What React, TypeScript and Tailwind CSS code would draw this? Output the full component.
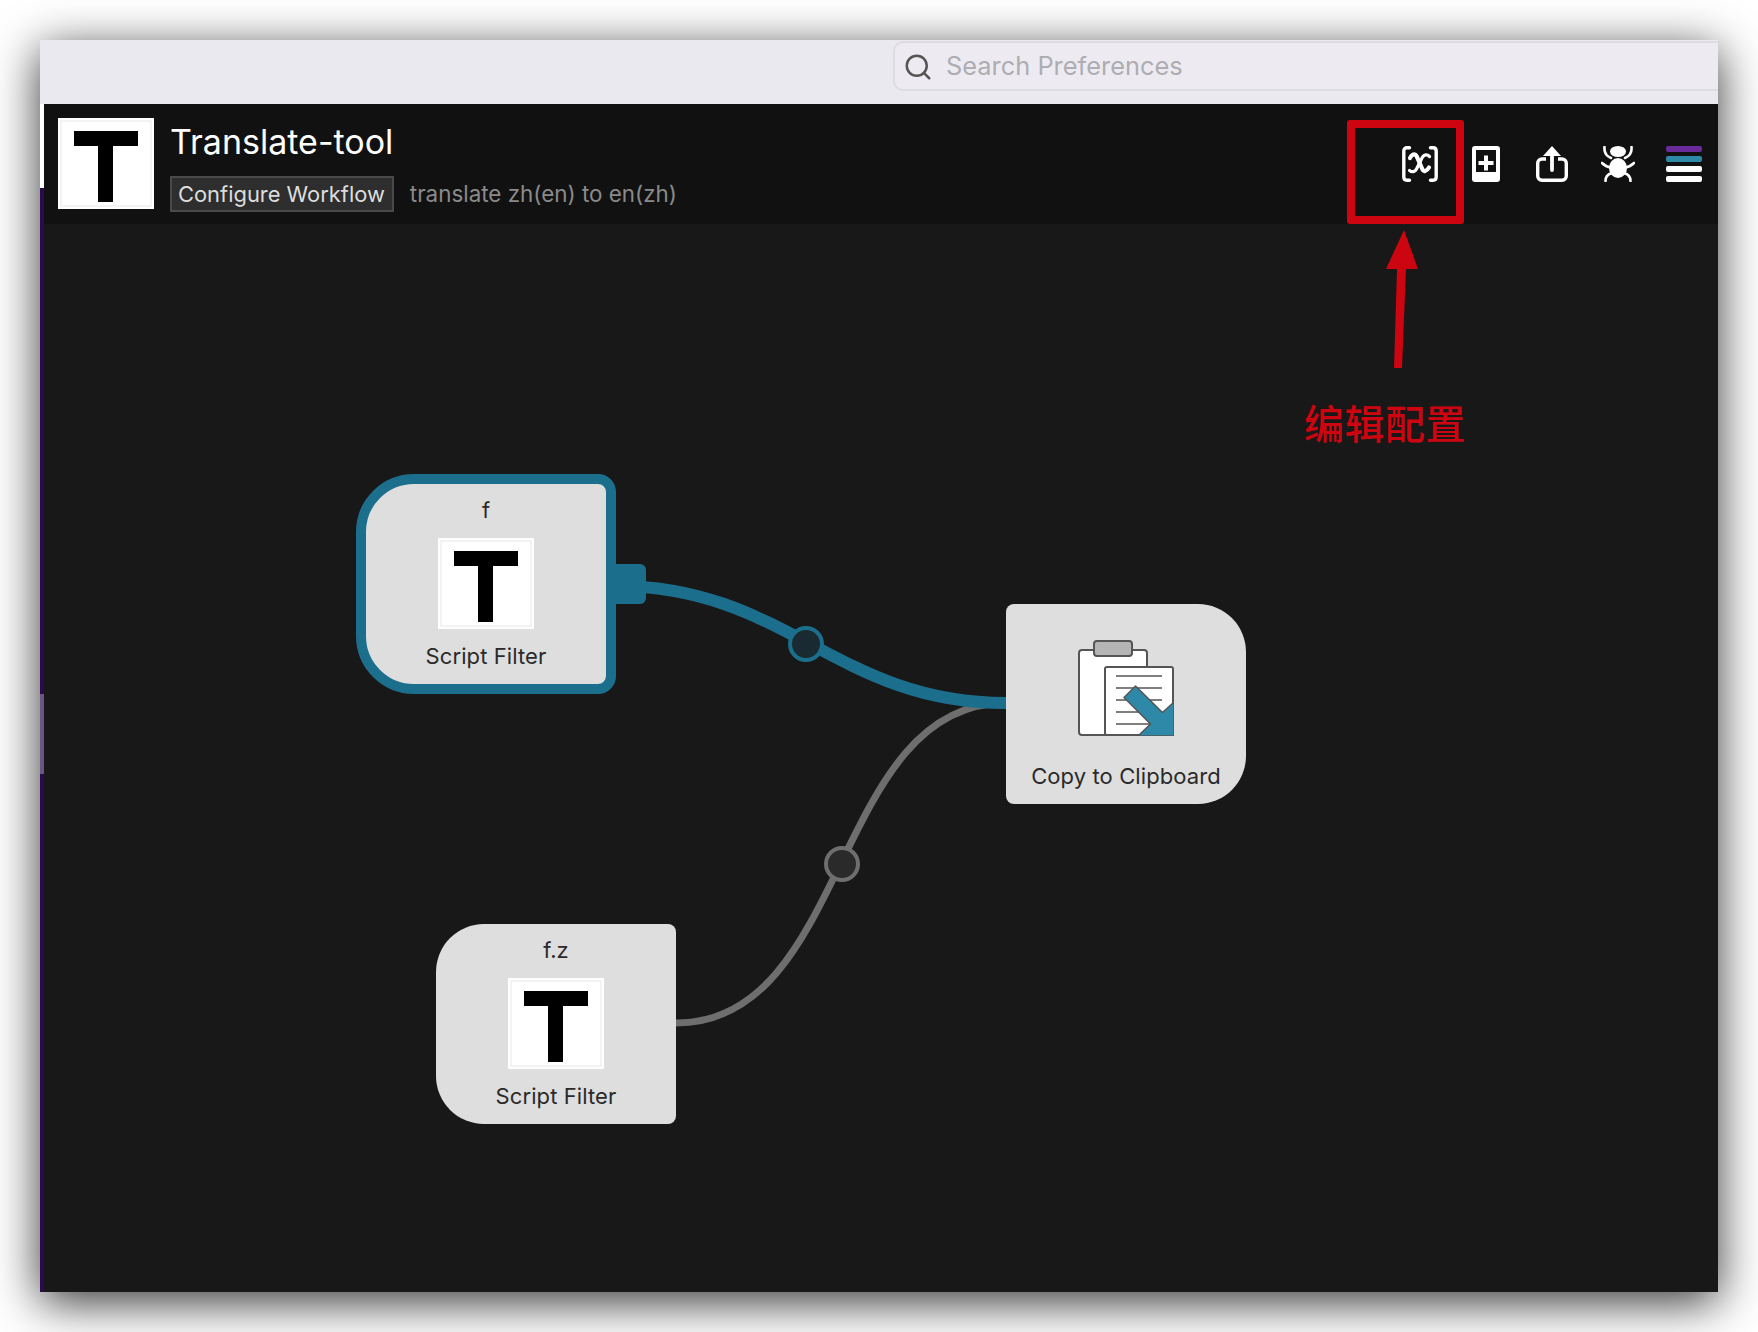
import { Search } from "lucide-react";

const UI_FONT = "font-['Inter','Liberation_Sans',sans-serif]";

// Workflow icon: white tile with a black T
function TileIcon() {
  return (
    <svg width="96" height="91" viewBox="0 0 96 91" className="shrink-0 block">
      <rect width="96" height="91" fill="#fff" />
      <rect x="3" y="3" width="90" height="85" fill="none" stroke="#efefef" strokeWidth="1.5" />
      <rect x="16" y="13" width="64" height="15" fill="#000" />
      <rect x="40" y="13" width="15" height="71" fill="#000" />
    </svg>
  );
}

function ClipboardIcon() {
  return (
    <svg width="96" height="96" viewBox="0 0 96 96" className="shrink-0 block">
      <rect x="1" y="10" width="68" height="85" rx="3" fill="#fff" stroke="#555" strokeWidth="2" />
      <rect x="16" y="1" width="38" height="15" rx="3" fill="#b5b5b5" stroke="#555" strokeWidth="2" />
      <rect x="27" y="27" width="68" height="68" rx="2" fill="#fff" stroke="#555" strokeWidth="2" />
      <path d="M38 36h46M38 48h46M38 60h46M38 72h46M38 84h46" stroke="#555" strokeWidth="1.5" fill="none" />
      <path d="M57.5 46 46 57.5 72.500 84 60 96 96 96 96 62 84.500 72.500Z" fill="#2e88a8" stroke="#555" strokeWidth="1.5" strokeLinejoin="round" />
    </svg>
  );
}

function VarsIcon() {
  return (
    <svg width="36" height="36" viewBox="0 0 36 36" fill="none" stroke="#fff" strokeWidth="3.4" strokeLinecap="round">
      <path d="M7.500 1.800H5C3 1.800 1.800 3 1.800 5V31C1.800 33 3 34.200 5 34.200H7.500" />
      <path d="M28.500 1.800H31C33 1.800 34.200 3 34.200 5V31C34.200 33 33 34.200 31 34.200H28.500" />
      <path d="M8 12C9.500 8.500 13 7 14.500 10L20.500 23.500C21.500 26 24.500 25.500 27 21.500" strokeWidth="4.200" />
      <path d="M27.500 10.500C25 8 22.500 8.500 20.500 11L14.500 23C13 26 10 26.500 7.500 24.500" strokeWidth="3.200" />
    </svg>
  );
}

function AddIcon() {
  return (
    <svg width="28" height="36" viewBox="0 0 28 36">
      <path
        fillRule="evenodd"
        fill="#fff"
        d="M3 0H25A3 3 0 0 1 28 3V33A3 3 0 0 1 25 36H3A3 3 0 0 1 0 33V3A3 3 0 0 1 3 0ZM4 4V26H24V4Z"
      />
      <path d="M14 9.500V24.500M6.500 17H21.500" stroke="#fff" strokeWidth="4" />
    </svg>
  );
}

function ShareIcon() {
  return (
    <svg width="32" height="36" viewBox="0 0 32 36" fill="none" stroke="#fff" strokeWidth="3.400">
      <path d="M10 13H6A4.300 4.300 0 0 0 1.700 17.300V30A4.300 4.300 0 0 0 6 34.300H26A4.300 4.300 0 0 0 30.300 30V17.300A4.300 4.300 0 0 0 26 13H22" />
      <path d="M16 24V7" strokeWidth="3.800" strokeLinecap="round" />
      <path d="M16 0 25 10H7Z" fill="#fff" stroke="none" />
    </svg>
  );
}

function BugIcon() {
  return (
    <svg width="34" height="36" viewBox="0 0 34 36" fill="none" stroke="#fff" strokeWidth="2.600" strokeLinecap="round">
      <ellipse cx="17" cy="5.500" rx="8" ry="5.500" fill="#fff" stroke="none" />
      <ellipse cx="17" cy="22" rx="9" ry="10" fill="#fff" stroke="none" />
      <path d="M3.500 1C3 6 5 10 10 12" />
      <path d="M30.500 1C31 6 29 10 24 12" />
      <path d="M1 17C4 20 7 21 10 21.500" />
      <path d="M33 17C30 20 27 21 24 21.500" />
      <path d="M4.500 35C4.500 31 7 28 11 27" />
      <path d="M29.500 35C29.500 31 27 28 23 27" />
    </svg>
  );
}

function MenuIcon() {
  return (
    <div className="flex flex-col gap-[4px] w-[36px]">
      <div className="h-[6px] rounded-[2px] bg-[#6a2b9a]" />
      <div className="h-[6px] rounded-[2px] bg-[#2e88a8]" />
      <div className="h-[6px] rounded-[2px] bg-white" />
      <div className="h-[6px] rounded-[2px] bg-white" />
    </div>
  );
}

function ScriptFilterBody({ label }: { label: string }) {
  return (
    <div className="flex flex-col items-center text-[#2a2a2a] text-[22px] tracking-[0.1px]">
      <div className="mt-[12px] h-[28px] leading-[28px]">{label}</div>
      <div className="mt-[14px]">
        <TileIcon />
      </div>
      <div className="mt-[13px] h-[28px] leading-[28px]">Script Filter</div>
    </div>
  );
}

function Wires() {
  return (
    <svg
      className="absolute inset-0"
      width="1674"
      height="1068"
      viewBox="44 224 1674 1068"
      fill="none"
    >
      <path d="M676 1023C850 1023 832 703 1006 703" stroke="#6e6e6e" strokeWidth="7" />
      <path d="M616 586C786 586 836 703 1006 703" stroke="#1b6f8d" strokeWidth="12" />
      <circle cx="806" cy="644" r="16" fill="#1a2a33" stroke="#1b6f8d" strokeWidth="4" />
      <circle cx="842" cy="864" r="16" fill="#2a2a2a" stroke="#6e6e6e" strokeWidth="4" />
    </svg>
  );
}

export default function App() {
  return (
    <div className={`relative w-[1758px] h-[1332px] overflow-hidden bg-white pt-[40px] pl-[40px] ${UI_FONT}`}>
      <div className="relative flex flex-col w-[1678px] h-[1252px] shadow-[0_10px_44px_rgba(0,0,0,0.8)]">
        {/* Title bar */}
        <div className="flex h-[64px] shrink-0 bg-[#ebe9f0] pl-[853px] pt-[1px]">
          <div className="flex items-center flex-1 h-[50px] pt-[1px] rounded-l-[10px] border-2 border-r-0 border-[#dedce3] bg-[#edebf1]">
            <Search size={30} strokeWidth={2} className="ml-[8px] text-[#555]" />
            <span className="ml-[13px] text-[25.4px] text-[#aeadb1]">Search Preferences</span>
          </div>
        </div>

        <div className="flex flex-1 min-h-0">
          {/* Left edge strip */}
          <div className="flex flex-col w-[4px] shrink-0 bg-[#2a0c4e]">
            <div className="h-[84px] bg-white" />
            <div className="h-[506px]" />
            <div className="h-[80px] bg-[#6b5585]" />
          </div>

          <div className="flex flex-col flex-1 min-w-0">
            {/* Workflow header */}
            <div className="flex h-[120px] shrink-0 bg-[#111111] pl-[14px] pt-[14px] pr-[16px]">
              <TileIcon />
              <div className="ml-[16px] flex flex-col">
                <div className="h-[48px] text-[34px] leading-[48px] text-white">Translate-tool</div>
                <div className="mt-[10px] flex items-center">
                  <div className="flex items-center h-[36px] border-2 border-[#4a4a4a] bg-[#2e2e2e] pl-[6px] pr-[7px] text-[21.9px] text-[#dddddd]">
                    Configure Workflow
                  </div>
                  <div className="ml-[16px] text-[22.4px] text-[#8a8a8a]">translate zh(en) to en(zh)</div>
                </div>
              </div>
              <div className="ml-auto flex items-start pt-[28px]">
                <VarsIcon />
                <div className="ml-[34px]">
                  <AddIcon />
                </div>
                <div className="ml-[36px]">
                  <ShareIcon />
                </div>
                <div className="ml-[33px]">
                  <BugIcon />
                </div>
                <div className="ml-[31px]">
                  <MenuIcon />
                </div>
              </div>
            </div>

            {/* Canvas */}
            <div className="relative flex-1 bg-[#181818]">
              <Wires />

              <div className="absolute left-[312px] top-[250px] w-[260px] h-[220px] border-[10px] border-[#1b6f8d] rounded-l-[58px] rounded-r-[18px] bg-[#dedede]">
                <ScriptFilterBody label="f" />
                <div className="absolute -right-[40px] top-[80px] w-[40px] h-[40px] rounded-r-[6px] bg-[#1b6f8d]" />
              </div>

              <div className="absolute left-[392px] top-[700px] w-[240px] h-[200px] rounded-l-[48px] rounded-r-[8px] bg-[#dedede]">
                <ScriptFilterBody label="f.z" />
              </div>

              <div className="absolute left-[962px] top-[380px] flex flex-col items-center w-[240px] h-[200px] pt-[36px] rounded-l-[8px] rounded-r-[48px] bg-[#dedede] text-[22px] tracking-[0.1px] text-[#2a2a2a]">
                <ClipboardIcon />
                <div className="mt-[26px] h-[28px] leading-[28px]">Copy to Clipboard</div>
              </div>
            </div>
          </div>
        </div>

        {/* Red annotation */}
        <div className="absolute left-[1307px] top-[80px] w-[117px] h-[104px] rounded-[3px] border-[8px] border-[#cc0510]" />
        <svg className="absolute left-[1346px] top-[190px]" width="32" height="138" viewBox="0 0 32 138">
          <path d="M18 0 0 39H11L8 138H16L20 39H32Z" fill="#cc0510" />
        </svg>
        <div className="absolute left-[1264px] top-[358px] text-[40px] tracking-[0.5px] leading-[48px] font-medium text-[#cc0510] font-['Noto_Sans_CJK_SC',sans-serif]">
          编辑配置
        </div>
      </div>
    </div>
  );
}
